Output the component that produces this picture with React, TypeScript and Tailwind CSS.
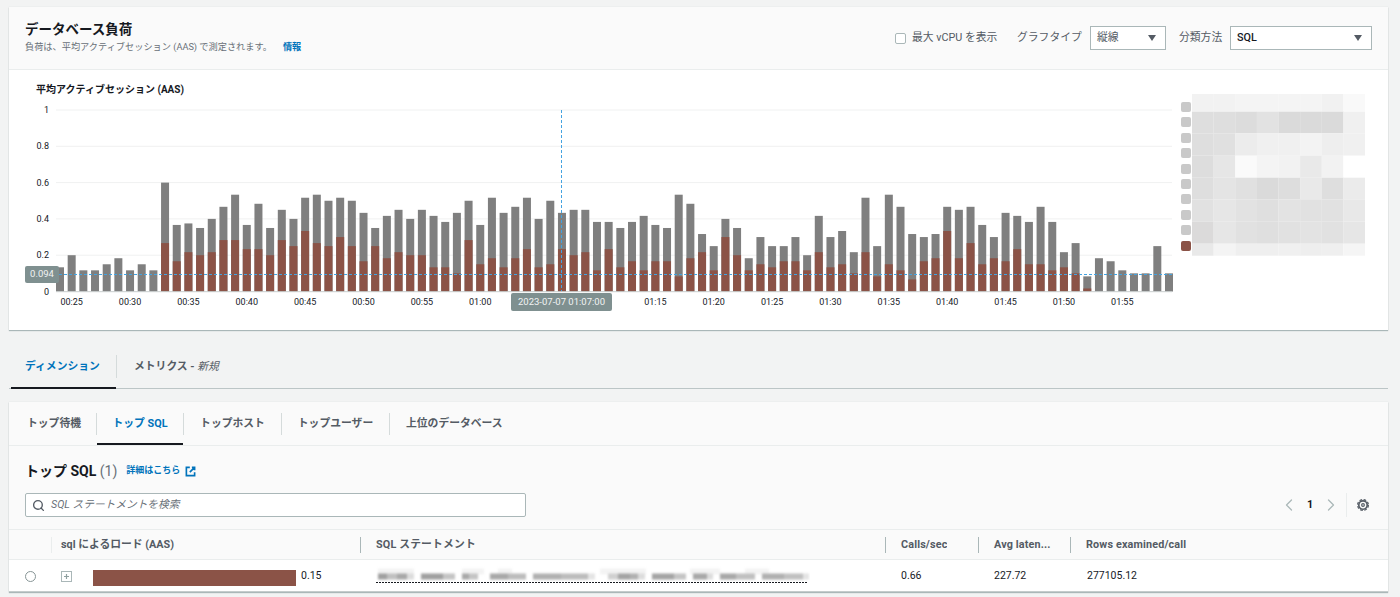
import { ChevronLeft, ChevronRight, Search } from "lucide-react";

// bar heights in 1/60 AAS
const totals = [
  8, 12, 7, 7, 9, 11, 7, 9, 7, 36, 22, 22.5, 21, 24, 28, 32, 22, 29, 21, 27, 24, 31, 32, 30, 31, 30, 26, 21, 25, 27, 24, 27,
  25, 23, 26, 30, 22, 31, 26, 28, 31, 24, 30, 26, 27, 27, 23, 23, 21, 23, 25, 22, 21, 32, 29, 19, 15, 24, 21, 11, 18, 15, 15,
  18, 12, 25, 18, 20, 13, 31, 15, 32, 28, 19, 18, 19, 28, 27, 28, 22, 18, 26, 25, 23, 28, 23, 13, 16, 5, 11, 10, 7, 6, 6, 15, 6,
];
const reds = [
  0, 0, 0, 0, 0, 0, 0, 0, 0, 16, 10, 13, 12, 13, 17, 17, 14, 14, 12, 17, 15, 20, 16, 15, 18, 15, 10, 15, 11, 13, 12, 12,
  8, 8, 6, 17, 9, 11, 8, 11, 14, 8, 9, 14, 12, 13, 7, 14, 8, 10, 7, 10, 10, 5, 11, 13, 7, 18, 12, 7, 9, 8, 10, 10,
  7, 13, 8, 9, 6, 13, 5, 9, 7, 4, 10, 11, 20, 11, 16, 9, 11, 10, 14, 9, 9, 7, 8, 6, 1, 0, 0, 0, 0, 0, 0, 0,
];
const timeLabels = [
  [1, "00:25"], [6, "00:30"], [11, "00:35"], [16, "00:40"], [21, "00:45"], [26, "00:50"], [31, "00:55"], [36, "01:00"],
  [51, "01:15"], [56, "01:20"], [61, "01:25"], [66, "01:30"], [71, "01:35"], [76, "01:40"], [81, "01:45"], [86, "01:50"], [91, "01:55"],
] as const;
const yTicks = [
  ["1", 110], ["0.8", 146.3], ["0.6", 182.6], ["0.4", 218.9], ["0.2", 255.2],
] as const;

const mosaicRows = [
  { y: 94, h: 17.7, c: ["#f2f2f2", "#f2f2f2", "#f4f4f4", "#f4f4f4", "#f4f4f4", "#f4f4f4", "#f1f1f1", "#f9f9f9"] },
  { y: 111.7, h: 21.6, c: ["#dedede", "#dedede", "#dcdcdc", "#e2e2e2", "#dadada", "#dadada", "#dadada", "#f0f0f0"] },
  { y: 133.3, h: 22.4, c: ["#dedede", "#e0e0e0", "#ececec", "#f0f0f0", "#f0f0f0", "#f3f3f3", "#eeeeee", "#f0f0f0"] },
  { y: 155.7, h: 22, c: ["#dddddd", "#e6e6e6", "#fafafa", "#f4f4f4", "#f2f2f2", "#e9e9e9", "#f2f2f2", "#ffffff"] },
  { y: 177.7, h: 21.6, c: ["#dedede", "#e4e4e4", "#e0e0e0", "#dadada", "#dddddd", "#e9e9e9", "#dedede", "#ebebeb"] },
  { y: 199.3, h: 22.4, c: ["#e1e1e1", "#e6e6e6", "#e2e2e2", "#dfdfdf", "#e3e3e3", "#e1e1e1", "#e1e1e1", "#e8e8e8"] },
  { y: 221.7, h: 22, c: ["#dbdada", "#e6e6e6", "#e1e1e1", "#dfdfdf", "#e1e1e1", "#e3e3e3", "#e1e1e1", "#e6e6e6"] },
  { y: 243.7, h: 12, c: ["#e9e9e9", "#f4f4f4", "#efefef", "#efefef", "#f0f0f0", "#eeeeee", "#efefef", "#f5f5f5"] },
];

// blurred statement: x, width, grey
const sqlHalos = [
  [378, 36], [462, 22], [498, 14], [600, 46], [690, 30], [745, 24],
] as const;
const sqlBlocks = [
  [378, 9, "#a0a0a0"], [387, 10, "#c0c0c0"], [397, 10, "#a8a8a8"], [407, 7, "#dcdcdc"], [421, 22, "#a0a0a0"], [443, 12, "#c4c4c4"],
  [462, 7, "#a8a8a8"], [469, 9, "#c4c4c4"], [490, 18, "#a8a8a8"], [508, 18, "#bcbcbc"], [533, 28, "#b0b0b0"], [561, 27, "#bcbcbc"],
  [588, 7, "#e4e4e4"], [608, 10, "#d0d0d0"], [618, 12, "#a4a4a4"], [630, 8, "#b0b0b0"], [638, 7, "#dcdcdc"], [652, 22, "#a4a4a4"],
  [674, 12, "#c4c4c4"], [693, 14, "#a8a8a8"], [707, 6, "#dcdcdc"], [720, 16, "#a8a8a8"], [736, 19, "#c0c0c0"], [762, 22, "#b0b0b0"],
  [784, 19, "#c0c0c0"], [803, 6, "#e4e4e4"],
] as const;

const barX = (i: number) => 56 + (1116 / 95.6) * i;
const toY = (units: number) => 291.5 - (units / 60) * 181.5;

function LoadChart() {
  return (
    <svg viewBox="9 100 1166 220" className="h-[220px] w-[1166px]">
      {yTicks.map(([label, y]) => (
        <g key={label}>
          <line x1={56} x2={1172} y1={y} y2={y} stroke="#f0f1f1" />
          <text x={49} y={y + 3} textAnchor="end" fontSize={9} fill="#16191f">{label}</text>
        </g>
      ))}
      <text x={49} y={294.5} textAnchor="end" fontSize={9} fill="#16191f">0</text>
      {totals.map((total, i) => (
        <g key={i}>
          <rect x={barX(i)} y={toY(total)} width={8} height={291.5 - toY(total)} fill="#7f7f7f" />
          {reds[i] > 0 && <rect x={barX(i)} y={toY(reds[i])} width={8} height={291.5 - toY(reds[i])} fill="#8b5347" />}
        </g>
      ))}
      <line x1={56} x2={1172} y1={291.7} y2={291.7} stroke="#c8cdcd" />
      {timeLabels.map(([i, label]) => (
        <text key={label} x={barX(i) + 4} y={305} textAnchor="middle" fontSize={9} fill="#16191f">{label}</text>
      ))}
      <line x1={59} x2={1172} y1={274.5} y2={274.5} stroke="#44a3e0" strokeDasharray="3 2" />
      <line x1={561.5} x2={561.5} y1={110} y2={291} stroke="#44a3e0" strokeDasharray="3 2" />
    </svg>
  );
}

function Legend() {
  return (
    <div className="relative h-[162px] w-[184px]">
      <svg viewBox="1192 94 173 162" className="absolute left-[11px] top-0 h-[162px] w-[173px]">
        {mosaicRows.map((row) =>
          row.c.map((fill, i) => <rect key={row.y + "-" + i} x={1192 + i * 21.625} y={row.y} width={21.7} height={row.h} fill={fill} />),
        )}
      </svg>
      <div className="absolute left-0 top-[8px] flex flex-col gap-[5.4px]">
        {Array.from({ length: 9 }).map((_, i) => (
          <span key={i} className="h-[10px] w-[10px] rounded-[2px] bg-[#c9c9c9]" />
        ))}
        <span className="h-[10px] w-[10px] rounded-[2px] bg-[#8b5347]" />
      </div>
    </div>
  );
}

function Caret() {
  return (
    <svg viewBox="0 0 8 6" className="h-[6px] w-[8px] fill-[#545b64]">
      <path d="M0 0h8L4 6z" />
    </svg>
  );
}

function Divider({ className }: { className: string }) {
  return <span className={"w-px bg-[#d5dbdb] " + className} />;
}

function HeaderCell({ label }: { label: string }) {
  return (
    <div className="flex items-center">
      <span className="h-[16px] w-px bg-[#aab7b8]" />
      <span className="truncate pl-[15px] pt-px text-[10.8px] font-bold tracking-[0.15px] text-[#545b64]">{label}</span>
    </div>
  );
}

export default function App() {
  return (
    <div className="h-[597px] overflow-hidden bg-[#f2f3f3] pl-[9px] pr-[12px] pt-[7px] font-[Roboto,'Noto_Sans_CJK_JP',sans-serif] text-[#16191f]">
      {/* database load */}
      <section className="h-[323px] bg-white shadow-[0_1px_1px_0_#aab7b8,0_0_1px_0_#d5dbdb]">
        <header className="flex h-[63px] items-center justify-between border-b border-[#eaeded] bg-[#fafafa] pl-[16px] pr-[16px]">
          <div className="-mt-[3px]">
            <h1 className="text-[13.5px] font-bold leading-[18px]">データベース負荷</h1>
            <p className="mt-[3px] text-[9.2px] leading-[12px] text-[#687078]">
              負荷は、平均アクティブセッション (AAS) で測定されます。
              <a className="ml-[11px] font-bold text-[#0073bb]">情報</a>
            </p>
          </div>
          <div className="flex items-center text-[10.8px] text-[#545b64]">
            <span className="h-[11px] w-[11px] rounded-[2px] border border-[#aab7b8] bg-white" />
            <span className="ml-[6px] w-[105px]">最大 vCPU を表示</span>
            <span className="w-[73px]">グラフタイプ</span>
            <div className="flex h-[24px] w-[76px] items-center justify-between border border-[#aab7b8] bg-white pl-[6px] pr-[9px]">
              縦線
              <Caret />
            </div>
            <span className="ml-[13px] w-[51px]">分類方法</span>
            <div className="flex h-[24px] w-[142px] items-center justify-between border border-[#aab7b8] bg-white pl-[6px] pr-[9px] font-medium text-[#16191f]">
              SQL
              <Caret />
            </div>
          </div>
        </header>
        <div className="flex">
          <div className="relative">
            <p className="pl-[27px] pt-[13px] text-[10px] font-bold leading-[14px]">平均アクティブセッション (AAS)</p>
            <div className="pt-[3px]">
              <LoadChart />
            </div>
            <span className="absolute left-[16px] top-[196px] flex h-[17px] w-[34px] items-center justify-center rounded-[2px] bg-[#7f9090] text-[9.5px] text-[#f2f3f3]">
              0.094
            </span>
            <span className="absolute left-[502px] top-[223px] flex h-[18px] w-[101px] items-center justify-center rounded-[2px] bg-[#7f9090] text-[9.5px] text-[#f2f3f3]">
              2023-07-07 01:07:00
            </span>
          </div>
          <div className="ml-[6px] pt-[24px]">
            <Legend />
          </div>
        </div>
      </section>

      {/* tabs */}
      <nav className="mt-[15px] flex h-[44px] border-b border-[#bcc5c6]">
        <div className="relative flex w-[107px] items-center pl-[16px] pt-[2px] text-[10.8px] font-bold text-[#0073bb]">
          ディメンション
          <span className="absolute -bottom-px left-[2px] right-0 h-[2px] bg-[#16191f]" />
        </div>
        <Divider className="mt-[10px] h-[23px]" />
        <div className="flex items-center pl-[17px] pt-[2px] text-[10.8px] font-bold text-[#545b64]">
          メトリクス -&nbsp;<em className="font-normal">新規</em>
        </div>
      </nav>

      {/* top sql */}
      <section className="mt-[13px] h-[190px] bg-[#fafafa] shadow-[0_1px_1px_0_#aab7b8,0_0_1px_0_#d5dbdb]">
        <div className="flex h-[44px] items-center border-b border-[#eaeded] pl-[18px] pt-px text-[10.8px] font-bold text-[#545b64]">
          <span className="w-[69px]">トップ待機</span>
          <Divider className="h-[22px]" />
          <div className="relative flex h-full w-[86px] items-center justify-center text-[#0073bb]">
            トップ SQL
            <span className="absolute bottom-0 left-0 right-0 h-[2px] bg-[#16191f]" />
          </div>
          <Divider className="h-[22px]" />
          <span className="w-[97px] text-center">トップホスト</span>
          <Divider className="h-[22px]" />
          <span className="w-[107px] text-center">トップユーザー</span>
          <Divider className="h-[22px]" />
          <span className="pl-[16px]">上位のデータベース</span>
        </div>

        <div className="flex items-center pl-[16px] pt-[16px]">
          <h2 className="text-[14px] font-bold leading-[18px]">
            トップ SQL <span className="font-normal text-[#687078]">(1)</span>
          </h2>
          <a className="ml-[9px] text-[9px] font-bold text-[#0073bb]">詳細はこちら</a>
          <svg viewBox="0 0 16 16" className="ml-[5px] h-[11px] w-[11px] fill-none stroke-[#0073bb] stroke-[2.4]">
            <path d="M7 2H2v12h12V9M10 2h4v4M14 2 7 9" />
          </svg>
        </div>

        <div className="mt-[13px] flex items-center pl-[16px] pr-[19px]">
          <div className="flex h-[24px] w-[501px] items-center rounded-[2px] border border-[#aab7b8] bg-white pl-[6px] text-[10.7px] italic text-[#687078]">
            <Search className="h-[13px] w-[13px] text-[#545b64]" strokeWidth={2.5} />
            <span className="ml-[6px]">SQL ステートメントを検索</span>
          </div>
          <div className="ml-auto flex items-center">
            <ChevronLeft className="h-[20px] w-[20px] text-[#aab7b8]" strokeWidth={1.5} />
            <span className="w-[22px] text-center text-[10.8px] font-bold">1</span>
            <ChevronRight className="h-[20px] w-[20px] text-[#aab7b8]" strokeWidth={1.5} />
            <span className="ml-[5px] h-[24px] w-px bg-[#eaeded]" />
            <svg viewBox="0 0 16 16" className="ml-[10px] h-[12px] w-[12px] fill-none stroke-[#545b64]">
              <circle cx="8" cy="8" r="5.6" strokeWidth="2.2" />
              <circle cx="8" cy="8" r="7.2" strokeWidth="1.6" strokeDasharray="3.6 2.05" />
              <circle cx="8" cy="8" r="1.8" strokeWidth="1.6" />
            </svg>
          </div>
        </div>

        <div className="mt-[12px] grid h-[31px] grid-cols-[42px_309px_525px_93px_92px_1fr] border-y border-[#eaeded]">
          <span />
          <div className="flex items-center">
            <span className="h-[16px] w-px bg-[#eaeded]" />
            <span className="pl-[9px] pt-px text-[10.8px] font-bold text-[#545b64]">sql によるロード (AAS)</span>
          </div>
          <HeaderCell label="SQL ステートメント" />
          <HeaderCell label="Calls/sec" />
          <HeaderCell label="Avg laten..." />
          <HeaderCell label="Rows examined/call" />
        </div>
        <div className="grid h-[31px] grid-cols-[42px_309px_525px_93px_92px_1fr] items-center bg-white pt-px text-[10.5px] shadow-[0_1px_0_0_#c5cccc]">
          <span className="ml-[16px] h-[11px] w-[11px] rounded-full border border-[#879596] bg-white" />
          <div className="flex items-center">
            <svg viewBox="0 0 11 11" className="ml-[10px] h-[11px] w-[11px]">
              <rect x="0.5" y="0.5" width="10" height="10" fill="none" stroke="#aab7b8" />
              <path d="M5.500 3v5M3 5.500h5" stroke="#8fa0a0" strokeWidth="1.2" />
            </svg>
            <span className="ml-[21px] mt-[3px] h-[16px] w-[203px] bg-[#8b5347]" />
            <span className="ml-[5px]">0.15</span>
          </div>
          <svg viewBox="376 565.5 434 20" className="h-[20px] w-[434px] translate-x-[16px]">
            <g className="blur-[1px]">
              {sqlHalos.map(([x, w]) => (
                <rect key={x} x={x} y={568} width={w} height={6} fill="#f3f3f3" />
              ))}
              {sqlBlocks.map(([x, w, fill]) => (
                <rect key={x} x={x} y={573} width={w} height={6} fill={fill} />
              ))}
            </g>
            <line x1={376} x2={808} y1={582} y2={582} stroke="#16191f" strokeDasharray="2 1" />
          </svg>
          <span className="pl-[16px]">0.66</span>
          <span className="pl-[16px]">227.72</span>
          <span className="pl-[17px]">277105.12</span>
        </div>
      </section>
    </div>
  );
}
